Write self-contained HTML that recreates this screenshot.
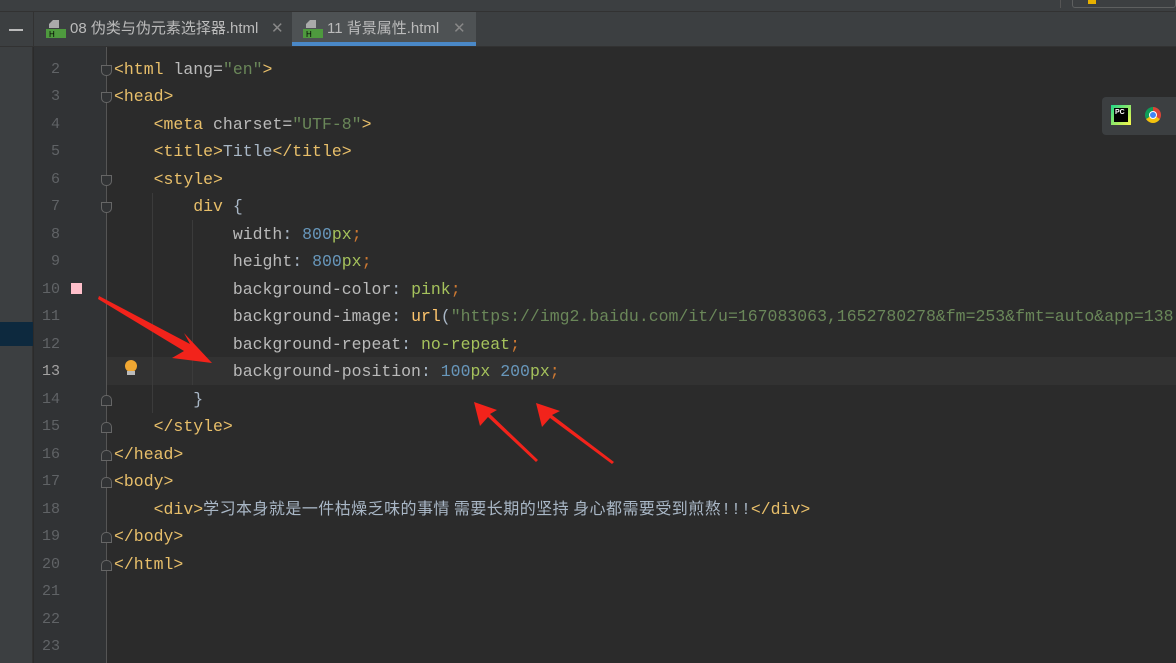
<!DOCTYPE html>
<html><head><meta charset="utf-8"><style>
*{margin:0;padding:0;box-sizing:border-box}
body{width:1176px;height:663px;overflow:hidden;background:#2b2b2b;position:relative;font-family:"Liberation Mono","Noto Sans CJK SC",monospace}
.top{position:absolute;left:0;top:0;width:1176px;height:12px;background:#3c3f41;border-bottom:1px solid #323232}
.tabs{position:absolute;left:0;top:12px;width:1176px;height:35px;background:#3c3f41;border-bottom:1px solid #323232}
.tab{position:absolute;top:0;height:34px;font:15px "Liberation Sans","Noto Sans CJK SC",sans-serif;color:#bbbbbb;line-height:34px}
.ico{position:absolute;top:8px;width:20px;height:18px}
.left{position:absolute;left:0;top:47px;width:33px;height:616px;background:#3c3f41;border-right:1px solid #323232}
.gut{position:absolute;left:34px;top:47px;width:72px;height:616px;background:#313335}
.gl{position:absolute;left:106px;top:47px;width:1px;height:616px;background:#555}
.ln{position:absolute;left:34px;width:26px;text-align:right;color:#606366;font-size:15px}
.code{position:absolute;left:114px;white-space:pre;font-size:16.5px;color:#a9b7c6}
.t{color:#e8bf6a}.a{color:#bababa}.s{color:#6a8759}.n{color:#6897bb}.o{color:#cc7832}.v{color:#a5c25c}.p{color:#bababa}.c{font-family:"Noto Sans CJK SC",sans-serif;font-size:16px;letter-spacing:0.45px;color:#a9b7c6;line-height:0}
.fold{position:absolute;left:101px;width:11px;height:11px;border:1px solid #666;background:#313335}
.guide{position:absolute;width:1px;background:#3b3b3b}
</style></head><body>
<div class="top"><div style="position:absolute;left:1060px;top:0;width:1px;height:8px;background:#555"></div><div style="position:absolute;left:1072px;top:-2px;width:104px;height:10px;border:1px solid #5e6060;border-radius:3px"></div><div style="position:absolute;left:1088px;top:0;width:8px;height:4px;background:#e8b100"></div></div>
<div class="tabs">
<div style="position:absolute;left:9px;top:17px;width:14px;height:2px;background:#bbb"></div>
<div style="position:absolute;left:33px;top:0;width:1px;height:34px;background:#323232"></div>
<div class="tab" style="left:34px;width:258px">
<svg class="ico" style="left:12px" viewBox="0 0 20 18"><path d="M7 0h6v8H3V4z" fill="#aaa"/><rect x="0" y="9" width="20" height="9" fill="#4e9a3e"/><text x="3" y="17" font-size="8" fill="#000" font-family="Liberation Sans">H</text></svg>
<span style="position:absolute;left:36px">08 伪类与伪元素选择器.html</span><span style="position:absolute;left:237px;color:#888">✕</span></div>
<div class="tab" style="left:292px;width:184px;background:#4e5254">
<svg class="ico" style="left:11px" viewBox="0 0 20 18"><path d="M7 0h6v8H3V4z" fill="#aaa"/><rect x="0" y="9" width="20" height="9" fill="#4e9a3e"/><text x="3" y="17" font-size="8" fill="#000" font-family="Liberation Sans">H</text></svg>
<span style="position:absolute;left:35px">11 背景属性.html</span><span style="position:absolute;left:161px;color:#888">✕</span>
<div style="position:absolute;left:0;bottom:0;width:184px;height:4px;background:#4a88c7"></div></div>
</div>
<div class="left"><div style="position:absolute;left:0;top:275px;width:33px;height:24px;background:#0d293e"></div></div>
<div class="gut"></div>
<div style="position:absolute;left:106px;top:357px;width:1070px;height:28px;background:#323232"></div>
<div class="gl"></div>
<div class="guide" style="left:152px;top:193px;height:220px"></div>
<div class="guide" style="left:192px;top:220px;height:165px"></div>
<div style="position:absolute;left:1102px;top:97px;width:74px;height:38px;background:#3c3f41;border-radius:4px 0 0 4px"></div>
<div style="position:absolute;left:1111px;top:105px;width:20px;height:20px;background:linear-gradient(135deg,#21d789,#fcf84a)"><div style="position:absolute;left:3px;top:3px;width:14px;height:14px;background:#000;color:#fff;font:bold 7px 'Liberation Sans';padding:1px">PC</div></div>
<div style="position:absolute;left:1145px;top:107px;width:16px;height:16px;border-radius:50%;background:conic-gradient(#db4437 0 120deg,#f4c20d 120deg 240deg,#0f9d58 240deg)"><div style="position:absolute;left:4px;top:4px;width:8px;height:8px;border-radius:50%;background:#4285f4;border:1px solid #fff"></div></div>
<div id="lines"></div>
<div style="position:absolute;left:71px;top:283px;width:11px;height:11px;background:#ffc0cb"></div>
<div style="position:absolute;left:125px;top:360px;width:12px;height:12px;border-radius:50%;background:#f0a732"></div>
<div style="position:absolute;left:127px;top:371px;width:8px;height:4px;background:#bbb"></div>
<script>
var L=[
'<span class="t">&lt;html </span><span class="a">lang=</span><span class="s">"en"</span><span class="t">&gt;</span>',
'<span class="t">&lt;head&gt;</span>',
'    <span class="t">&lt;meta </span><span class="a">charset=</span><span class="s">"UTF-8"</span><span class="t">&gt;</span>',
'    <span class="t">&lt;title&gt;</span>Title<span class="t">&lt;/title&gt;</span>',
'    <span class="t">&lt;style&gt;</span>',
'        <span class="t">div</span> {',
'            <span class="p">width</span>: <span class="n">800</span><span class="v">px</span><span class="o">;</span>',
'            <span class="p">height</span>: <span class="n">800</span><span class="v">px</span><span class="o">;</span>',
'            <span class="p">background-color</span>: <span class="v">pink</span><span class="o">;</span>',
'            <span class="p">background-image</span>: <span style="color:#ffc66d">url</span>(<span class="s">"https://img2.baidu.com/it/u=167083063,1652780278&amp;fm=253&amp;fmt=auto&amp;app=138</span>',
'            <span class="p">background-repeat</span>: <span class="v">no-repeat</span><span class="o">;</span>',
'            <span class="p">background-position</span>: <span class="n">100</span><span class="v">px</span> <span class="n">200</span><span class="v">px</span><span class="o">;</span>',
'        }',
'    <span class="t">&lt;/style&gt;</span>',
'<span class="t">&lt;/head&gt;</span>',
'<span class="t">&lt;body&gt;</span>',
'    <span class="t">&lt;div&gt;</span><span class="c">学习本身就是一件枯燥乏味的事情 需要长期的坚持 身心都需要受到煎熬</span>!!!<span class="t">&lt;/div&gt;</span>',
'<span class="t">&lt;/body&gt;</span>',
'<span class="t">&lt;/html&gt;</span>','','',''];
var folds=[2,3,6,7,14,15,16,17,19,20],h='';
for(var i=0;i<22;i++){var n=i+2,y=58+i*27.48;
h+='<div class="ln" style="top:'+(y)+'px;height:24px;line-height:24px;'+(n==13?'color:#a4a3a3':'')+'">'+n+'</div>';
h+='<div class="code" style="top:'+y+'px;height:24px;line-height:24px">'+L[i]+'</div>';
if(folds.indexOf(n)>=0)h+='<div class="fold" style="top:'+(y+7)+'px;'+(n>13?'border-radius:5px 5px 0 0':'border-radius:0 0 5px 5px')+'"></div>';}
document.getElementById('lines').innerHTML=h;
</script>
<svg style="position:absolute;left:0;top:0" width="1176" height="663">
<polygon points="99,296 190,344 184,333 212,363 172,358 184,351 98,299" fill="#f2231b"/>
<polygon points="536,462 488,417 480,426 474,402 497,410 490,414 538,460" fill="#f2231b"/>
<polygon points="612,464 550,418 542,427 536,403 560,411 552,415 614,462" fill="#f2231b"/>
</svg>
</body></html>
